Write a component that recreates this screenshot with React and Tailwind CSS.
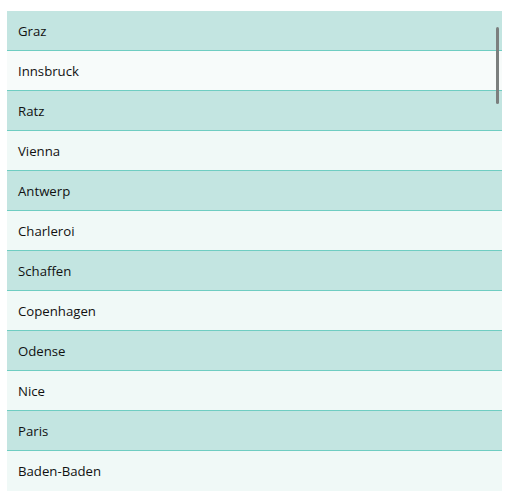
import React from 'react';

const cities = [
    'Graz', 'Innsbruck', 'Ratz', 'Vienna', 'Antwerp', 'Charleroi',
    'Schaffen', 'Copenhagen', 'Odense', 'Nice', 'Paris', 'Baden-Baden',
];

export default function App() {
    return (
        <div className="w-[508px] h-[496px] bg-white pt-[11px] pl-[7px]">
            <div className="relative w-[495px] h-[480px] overflow-hidden" style={{ fontFamily: '"Open Sans", "Noto Sans", sans-serif' }}>
                {cities.map((city, i) => (
                    <div
                        key={city}
                        className={`h-[40px] flex items-center pl-[11px] pt-[2px] text-[13.2px] text-[#111] ${
                            i < cities.length - 1 ? 'border-b border-[#6fcdc2]' : ''
                        } ${i % 2 === 0 ? 'bg-[#c3e5e1]' : i === 1 ? 'bg-[#f7fbfa]' : 'bg-[#f0f9f7]'}`}
                    >
                        {city}
                    </div>
                ))}

                {/* scrollbar thumb */}
                <div className="absolute top-[16px] left-[489px] w-[3px] h-[77px] rounded-full bg-[#7b7f7e]" />
            </div>
        </div>
    );
}
